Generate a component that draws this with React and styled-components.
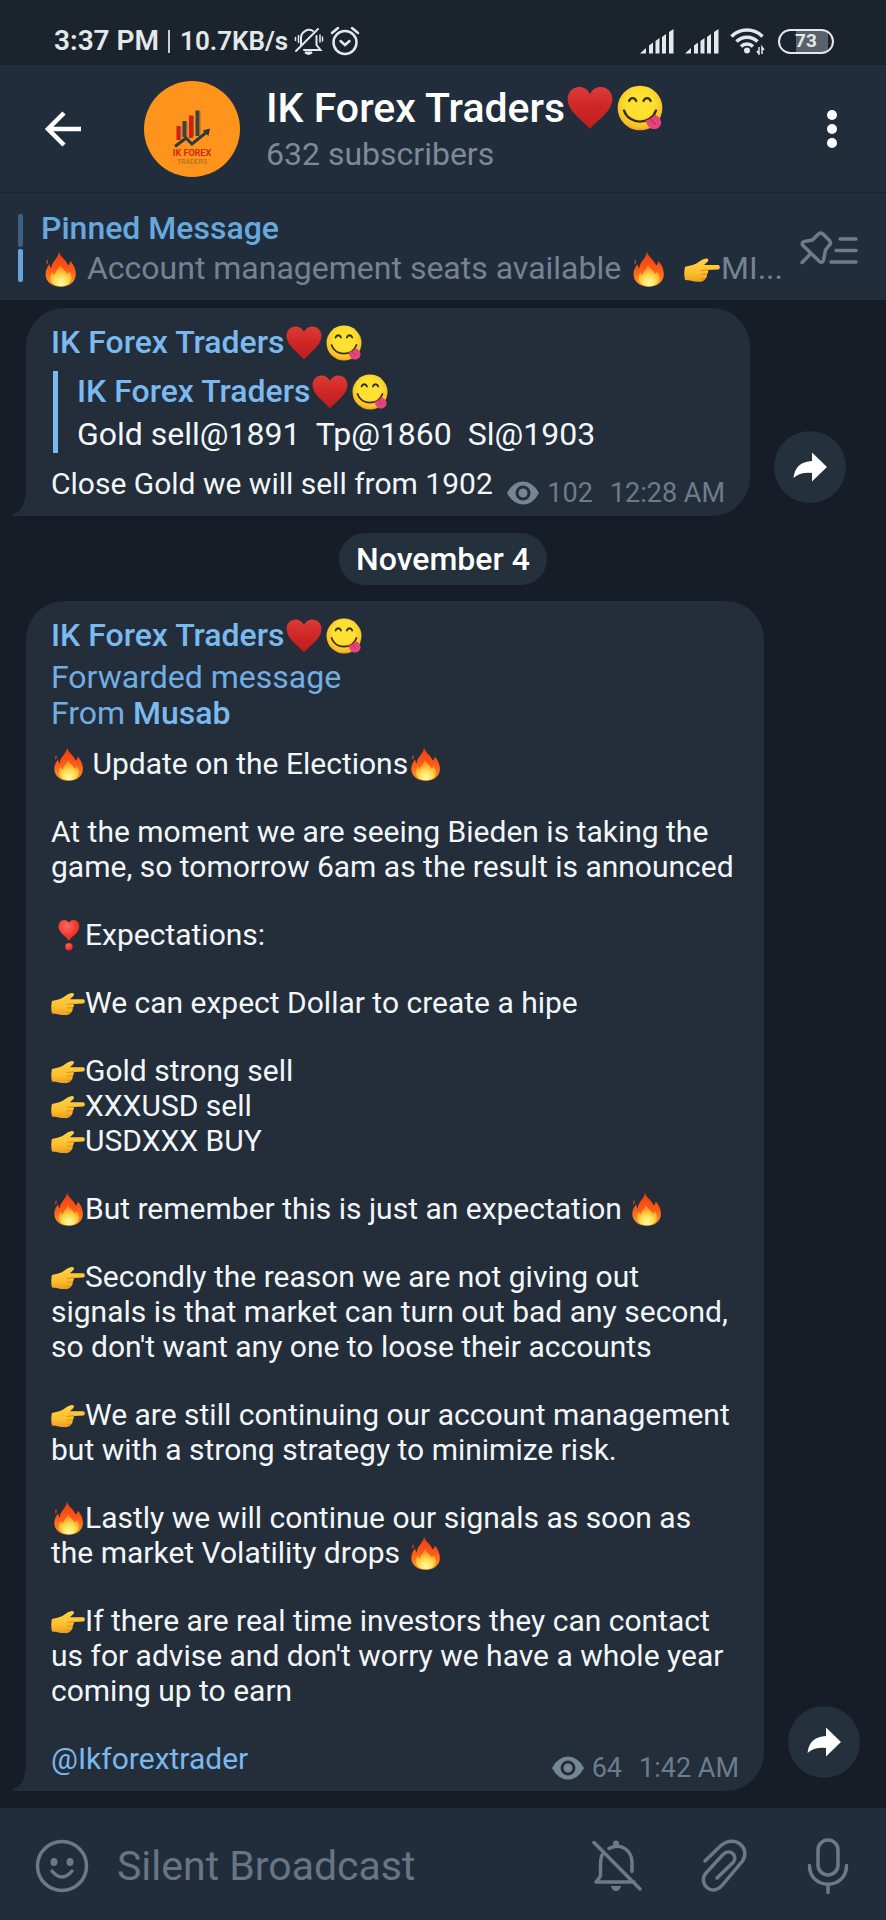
import React from "react";
import styled, { createGlobalStyle } from "styled-components";

const GlobalStyle = createGlobalStyle`
  * {
    box-sizing: border-box;
  }
  body {
    margin: 0;
    background: #161d26;
    font-family: Roboto, "Liberation Sans", sans-serif;
    color: #f3f6f9;
  }
  button, input {
    font: inherit;
    color: inherit;
    border: 0;
    padding: 0;
    background: none;
  }
  p, h1, h2 {
    margin: 0;
    font-weight: 400;
  }
  svg {
    display: block;
  }
`;

const Page = styled.div`
  min-height: 100vh;
  display: flex;
  flex-direction: column;
`;

/* status bar */
const StatusBar = styled.div`
  display: flex;
  align-items: center;
  justify-content: space-between;
  height: 65px;
  padding: 17px 52px 0 54px;
  background: #1b242d;
  color: #e4e8eb;
  font-weight: 700;
  font-size: 27px;
  line-height: 32px;
`;

const StatusGroup = styled.div`
  display: flex;
  align-items: center;
  gap: ${(props) => props.$gap};
`;

const Clock = styled.span`
  font-size: 28px;
  font-weight: 600;
`;

const NetSpeed = styled.span`
  font-size: 26px;
  font-weight: 600;
`;

const Divider = styled.span`
  width: 2px;
  height: 23px;
  margin: 0 4px 0 3px;
  background: #c9ced2;
`;

const Battery = styled.span`
  display: flex;
  align-items: center;
  justify-content: center;
  width: 56px;
  height: 25px;
  margin-left: 2px;
  border: 2px solid #e4e8eb;
  border-radius: 13px;
  background: linear-gradient(90deg, transparent 30%, #59616a 30%, #59616a 92%, transparent 92%);
  font-size: 19px;
  line-height: 20px;
`;

/* header */
const Header = styled.header`
  display: flex;
  align-items: center;
  height: 128px;
  padding: 0 40px;
  background: #222d3b;
  border-bottom: 1px solid #1c2531;
`;

const IconButton = styled.button`
  display: flex;
  flex: none;
  cursor: pointer;
`;

const Avatar = styled.div`
  flex: none;
  margin: 0 26px 0 58px;
`;

const Channel = styled.div`
  flex: 1;
  min-width: 0;
  display: flex;
  flex-direction: column;
  gap: 2px;
`;

const ChannelName = styled.h1`
  font-size: 41px;
  line-height: 48px;
  font-weight: 500;
  color: #ffffff;
  white-space: nowrap;
`;

const Subscribers = styled.p`
  font-size: 32px;
  line-height: 40px;
  color: #7c8a99;
`;

/* pinned message */
const Pinned = styled.section`
  display: flex;
  align-items: center;
  padding: 15px 28px 12px 18px;
  background: #222d3b;
`;

const PinnedBars = styled.div`
  display: flex;
  flex-direction: column;
  gap: 2px;
  margin-right: 18px;
`;

const PinnedBar = styled.span`
  width: 5px;
  height: 33px;
  border-radius: 2px;
  background: ${(props) => (props.$active ? "#65a5dc" : "#3f5f80")};
`;

const PinnedBody = styled.div`
  flex: 1;
  min-width: 0;
  margin-right: 12px;
  font-size: 32px;
  line-height: 40px;
`;

const PinnedTitle = styled.h2`
  font-size: inherit;
  font-weight: 500;
  color: #67a9df;
`;

const PinnedText = styled.p`
  color: #748394;
  white-space: nowrap;
  overflow: hidden;
`;

/* messages */
const Chat = styled.main`
  flex: 1;
  display: flex;
  flex-direction: column;
  padding: 8px 26px 14px;
`;

const MessageRow = styled.div`
  display: flex;
  align-items: flex-end;
  gap: 24px;
`;

const Bubble = styled.article`
  position: relative;
  min-width: 0;
  flex: 0 1 ${(props) => props.$basis};
  padding: 14px 25px 7px;
  border-radius: 38px 38px 38px 0;
  background: #232e3a;

  &::before {
    content: "";
    position: absolute;
    left: -13px;
    bottom: 0;
    width: 13px;
    height: 26px;
    background: radial-gradient(13px 24px at 0 0, transparent 96%, #232e3a 100%);
  }
`;

const Sender = styled.h2`
  font-size: 32px;
  line-height: 40px;
  font-weight: 500;
  color: #7bbaf0;
`;

const Quote = styled.blockquote`
  margin: 9px 0 13px 2px;
  padding-left: 19px;
  border-left: 5px solid #7bbaf0;
`;

const QuoteText = styled.p`
  margin-top: 4px;
  font-size: 32px;
  line-height: 38px;
  white-space: pre-wrap;
`;

const Forwarded = styled.p`
  font-size: 32px;
  line-height: 36px;
  margin: 4px 0 15px;
  color: #72aee2;
`;

const ForwardedFrom = styled.strong`
  font-weight: 500;
  color: #7bbaf0;
`;

const Paragraphs = styled.div`
  display: flex;
  flex-direction: column;
  gap: 33px;
`;

const Text = styled.p`
  font-size: 30px;
  line-height: 35px;
`;

const Mention = styled.a`
  color: #7bb8ec;
  text-decoration: none;
`;

const LastLine = styled.div`
  display: flex;
  align-items: flex-start;
  justify-content: space-between;
`;

const Meta = styled.div`
  display: flex;
  align-items: center;
  margin-top: 11px;
  font-size: 27px;
  line-height: 32px;
  color: #6d7c8c;
  white-space: nowrap;
`;

const Views = styled.span`
  margin: 0 17px 0 8px;
`;

const ShareButton = styled.button`
  display: flex;
  flex: none;
  align-items: center;
  justify-content: center;
  width: 72px;
  height: 72px;
  margin-bottom: 13px;
  border-radius: 50%;
  background: #24303c;
  cursor: pointer;
`;

const DateBadge = styled.div`
  align-self: center;
  margin: 17px 0 16px;
  padding: 6px 17px;
  border-radius: 26px;
  background: #24303c;
  font-size: 32px;
  line-height: 40px;
  font-weight: 500;
  color: #ffffff;
`;

/* composer */
const Composer = styled.form`
  display: flex;
  align-items: center;
  height: 112px;
  padding: 4px 36px 0 35px;
  background: #222d3b;
`;

const ComposerInput = styled.input`
  flex: 1;
  min-width: 0;
  margin: 0 28px;
  font-size: 41px;
  line-height: 48px;
  outline: none;

  &::placeholder {
    color: #677586;
    opacity: 1;
  }
`;

const ComposerActions = styled.div`
  display: flex;
  align-items: center;
  gap: 58px;
`;

/* emoji */
const emojiSizes = {
  text: { size: 34, gap: 0, drop: 7 },
  pinned: { size: 36, gap: 1, drop: 8 },
  name: { size: 36, gap: 2, drop: 8 },
  title: { size: 46, gap: 2, drop: 9 },
};

const EmojiSvg = styled.svg`
  display: inline-block;
  width: ${(props) => emojiSizes[props.$kind].size}px;
  height: ${(props) => emojiSizes[props.$kind].size}px;
  margin: 0 ${(props) => emojiSizes[props.$kind].gap}px;
  vertical-align: -${(props) => emojiSizes[props.$kind].drop}px;
`;

const EmojiGradients = styled.svg`
  position: absolute;
  width: 0;
  height: 0;
`;

const EmojiDefs = () => (
  <EmojiGradients aria-hidden="true">
    <defs>
      <linearGradient id="heartFill" x1="0" y1="0" x2="0" y2="1">
        <stop offset="0" stopColor="#dc3b38" />
        <stop offset="0.5" stopColor="#cf2626" />
        <stop offset="1" stopColor="#c01c1e" />
      </linearGradient>
      <radialGradient id="faceFill" cx="0.5" cy="0.4" r="0.62">
        <stop offset="0.5" stopColor="#fde030" />
        <stop offset="0.85" stopColor="#f8bf26" />
        <stop offset="1" stopColor="#ee9a1c" />
      </radialGradient>
      <linearGradient id="flameFill" x1="0" y1="0" x2="0" y2="1">
        <stop offset="0" stopColor="#ee3a10" />
        <stop offset="0.5" stopColor="#fb5a17" />
        <stop offset="1" stopColor="#ff9b2b" />
      </linearGradient>
      <radialGradient id="flameCore" cx="0.5" cy="0.85" r="0.75">
        <stop offset="0" stopColor="#fffbb4" />
        <stop offset="0.45" stopColor="#ffdc4a" />
        <stop offset="1" stopColor="#ff8a22" />
      </radialGradient>
      <linearGradient id="handFill" x1="0" y1="0" x2="0" y2="1">
        <stop offset="0" stopColor="#ffd24a" />
        <stop offset="0.6" stopColor="#fdc02f" />
        <stop offset="1" stopColor="#ee9f22" />
      </linearGradient>
      <radialGradient id="markFill" cx="0.4" cy="0.3" r="0.8">
        <stop offset="0" stopColor="#ff6a5e" />
        <stop offset="0.6" stopColor="#f2352c" />
        <stop offset="1" stopColor="#d61f1f" />
      </radialGradient>
    </defs>
  </EmojiGradients>
);

const Heart = ({ kind = "name" }) => (
  <EmojiSvg $kind={kind} viewBox="0 0 36 36" role="img" aria-label="red heart">
    <path
      d="M18 34.500C13 28 .5 21 .5 11 .5 5.500 4.500 1.500 9.500 1.500 13 1.500 16.500 3.500 18 7c1.500-3.500 5-5.500 8.500-5.500 5 0 9 4 9 9.500 0 10-12.500 17-17.500 23.500z"
      fill="url(#heartFill)"
    />
  </EmojiSvg>
);

const Yum = ({ kind = "name" }) => (
  <EmojiSvg $kind={kind} viewBox="0 0 36 36" role="img" aria-label="face savoring food">
    <circle cx="18" cy="18" r="17.500" fill="url(#faceFill)" />
    <g fill="none" stroke="#3b2a12" strokeWidth="1.800" strokeLinecap="round">
      <path d="M9.500 12.500c1-3 4.500-3 5.500 0M20.800 12.500c1-3 4.500-3 5.500 0" />
      <path d="M5.500 20c4 11.500 21 11.500 25 0" />
    </g>
    <path d="M22.500 27.500c3-.5 5.500-2 7-4.500 2 1 4.500 2.500 5 5.500.5 4-3 6.500-6.500 6-3-.5-5-4-5.500-7z" fill="#e4447c" />
    <path d="M26 26.500l4 4" stroke="#c42d66" strokeWidth="1" strokeLinecap="round" />
  </EmojiSvg>
);

const Fire = ({ kind = "text" }) => (
  <EmojiSvg $kind={kind} viewBox="0 0 36 36" role="img" aria-label="fire">
    <path
      d="M17 .3c.5 5 6 7.500 8.500 12.700.5 1.500 1.200 1.500 1.800.2.7-1.200.7-2 .9-3.200 3.300 3 5.600 8.500 5.600 13 0 8-6.300 12.700-15 12.700S3.500 31 3.500 23c0-4 2-7.500 4-10 .3 2 .8 3.500 1.800 4.500C9 11 16.500 7.500 17 .3z"
      fill="url(#flameFill)"
    />
    <path d="M5.500 8.500c-1.200 1.500-1.500 3.500-.5 5 1.200-1.500 1.300-3.500.5-5z" fill="#e8441a" />
    <path
      d="M18 13.500c1 4 6 6 7 9.500 1-.5 1.500-1.500 2-2.500 2 2.500 3 5 2.500 7.500-.8 4.500-5 7.300-10.500 7.300S9 32.500 8.300 28c-.4-2.500.7-5 2.200-7 .5 1.500 1 2.300 2 3 .5-4.500 5-6 5.500-10.500z"
      fill="url(#flameCore)"
    />
  </EmojiSvg>
);

const PointRight = ({ kind = "text" }) => (
  <EmojiSvg $kind={kind} viewBox="0 0 36 36" role="img" aria-label="pointing right">
    <path
      d="M1 16c3-1.200 6-1.300 9-2.500 4-1.200 7-5.200 12-6 2.500-.3 3 2 1.500 3.300L20 14h14c2.500.2 2.500 4.300 0 4.500L24 19c.5 2 0 3-1 4 .2 2.500-.5 4-2 5-1 2.500-4 3-7 2.800-5-.1-9-1.800-13-1.800-1-4-1-9 0-13z"
      fill="url(#handFill)"
    />
    <path d="M24 18.800l-7 .7M23 23l-5.500.2M21 28h-4" stroke="#d98c1b" strokeWidth="1" strokeLinecap="round" />
  </EmojiSvg>
);

const HeartMark = ({ kind = "text" }) => (
  <EmojiSvg $kind={kind} viewBox="0 0 36 36" role="img" aria-label="heart exclamation">
    <path
      d="M19 24.500c-2-5-11-8-11-15.500C8 5 10.500 2 14 2c2.200 0 4 1.200 5 3 1-1.800 2.800-3 5-3 3.500 0 6 3 6 7 0 7.500-9 10.500-11 15.500z"
      fill="url(#markFill)"
    />
    <circle cx="19" cy="30.500" r="4" fill="url(#markFill)" />
  </EmojiSvg>
);

const BrandName = ({ kind }) => (
  <>
    IK Forex Traders
    <Heart kind={kind} />
    <Yum kind={kind} />
  </>
);

/* icons */
const MutedIcon = () => (
  <svg width="30" height="28" viewBox="0 0 30 28" fill="none" stroke="#e4e8eb" strokeWidth="2" strokeLinecap="round">
    <path d="M7 18V11a8 8 0 0 1 12-7M22.500 9v9l4 5H10" />
    <path d="M2 24 24 2" />
    <path d="M4.500 8.500v7M1.500 10.500v3M26 8v7M28.500 10v4" strokeWidth="1.500" />
    <path d="M11 25.500h7l-3.500 1.500z" fill="#e4e8eb" />
  </svg>
);

const AlarmIcon = () => (
  <svg width="30" height="30" viewBox="0 0 30 30" fill="none" stroke="#e4e8eb" strokeWidth="2.500" strokeLinecap="round">
    <circle cx="15" cy="16.500" r="11.500" />
    <path d="M2 7 8 2M28 7 22 2M10.500 15l4.500 4 4.500-4" />
  </svg>
);

const SignalIcon = () => (
  <svg width="34" height="25" viewBox="0 0 34 25" fill="#e4e8eb">
    <path d="M0 24.500 6 19v5.500zM9 16.500l4-3v11H9zM15.500 12l4-3v15.500h-4zM22 8l4-3v19.500h-4zM29 3l4.500-3v24.500H29z" />
  </svg>
);

const WifiIcon = () => (
  <svg width="35" height="28" viewBox="0 0 35 28" fill="none" stroke="#e4e8eb" strokeWidth="3.500">
    <path d="M1.500 9.500a22 22 0 0 1 31 0M6.500 14.500a15 15 0 0 1 21 0M11 19.500a8.500 8.500 0 0 1 12 0" />
    <circle cx="17" cy="23.500" r="3" fill="#e4e8eb" stroke="none" />
    <path d="M29 20v7l-2-3M32 27v-7l2 3" strokeWidth="1.500" />
  </svg>
);

const BackIcon = () => (
  <svg width="46" height="40" viewBox="0 0 46 40" fill="none" stroke="#fff" strokeWidth="4.500">
    <path d="M41 20H8M24 4 8 20l16 16" />
  </svg>
);

const DotsIcon = () => (
  <svg width="28" height="40" viewBox="0 0 28 40" fill="#fff">
    <circle cx="14" cy="6" r="5" />
    <circle cx="14" cy="20" r="5" />
    <circle cx="14" cy="34" r="5" />
  </svg>
);

const AvatarLogo = () => (
  <svg width="96" height="96" viewBox="0 0 96 96">
    <circle cx="48" cy="48" r="48" fill="#fe941c" />
    <path d="M32.500 45h4v14h-4zM45 34.500h4V57h-4z" fill="#cf1f1a" />
    <path d="M38.500 40h4v16h-4zM51.500 29.500h4V55h-4z" fill="#3c4141" />
    <path d="M37 45.500v12M43 41v13M49.500 35v20M56 30v23" stroke="#a5662a" strokeWidth="1" />
    <path d="M31 65.500l11-8.500 6 6 16-13" fill="none" stroke="#33393b" strokeWidth="3" />
    <path d="M58.500 49.500l7.500-2-1.500 7.500z" fill="#33393b" />
    <text x="48" y="75" textAnchor="middle" fontSize="9" fontWeight="700" fill="#cf2a18">IK FOREX</text>
    <text x="48" y="83" textAnchor="middle" fontSize="7" fill="#9a6a25">TRADERS</text>
  </svg>
);

const PinListIcon = () => (
  <svg width="58" height="34" viewBox="0 0 58 34" fill="none" stroke="#6d7c8c" strokeWidth="3.500" strokeLinecap="round" strokeLinejoin="round">
    <path d="M2 31.500 11 22.500M2.500 14q-1-3 2-3.500l8-1.500 6-6q2.500-2 5 .5l6 6q2 2.500 0 4.500l-4 5-2 10.500q-1.500 3-4 1z" />
    <path d="M40 8h16M36 19.500h20M31 31h25" />
  </svg>
);

const EyeIcon = () => (
  <svg width="32" height="24" viewBox="0 0 32 24">
    <path d="M0 12Q6 .5 16 .5T32 12Q26 23.500 16 23.500T0 12z" fill="#748596" />
    <circle cx="16" cy="12" r="6" fill="none" stroke="#232e3a" strokeWidth="3" />
  </svg>
);

const ShareIcon = () => (
  <svg width="36" height="32" viewBox="0 0 36 32" fill="#fff">
    <path d="M20 1.500 35 16 20 30.500V22Q8 21 1.500 27 3 11 20 10z" />
  </svg>
);

const SmileIcon = () => (
  <svg width="54" height="54" viewBox="0 0 54 54" fill="none" stroke="#6b7989" strokeWidth="3.500" strokeLinecap="round">
    <circle cx="27" cy="27" r="24.500" />
    <path d="M17 32q10 12 20 0" />
    <ellipse cx="19" cy="23" rx="3.500" ry="4" fill="#6b7989" stroke="none" />
    <ellipse cx="35" cy="23" rx="3.500" ry="4" fill="#6b7989" stroke="none" />
  </svg>
);

const BellOffIcon = () => (
  <svg width="50" height="54" viewBox="0 0 50 54" fill="none" stroke="#6b7989" strokeWidth="3.500" strokeLinecap="round" strokeLinejoin="round">
    <path d="M2 3.500 48 50" />
    <path d="M17 9.500C30 3 40 12 40 24v8.500M10 16q-1.500 4-1.500 9v11q0 2-4.500 7h38" />
    <circle cx="24" cy="4.500" r="3" fill="#6b7989" stroke="none" />
    <path d="M19 47h10q-1 5-5 5t-5-5z" fill="#6b7989" stroke="none" />
  </svg>
);

const ClipIcon = () => (
  <svg width="48" height="54" viewBox="0 0 48 54" fill="none" stroke="#6b7989" strokeWidth="3.500" strokeLinecap="round">
    <path d="M5 22 21 6.500C35-5 51 9 42.500 22L22 46.500C12 58 -2 45 5.500 34.500L23 15.500c7-6.500 15 1 10.500 7.500L17 39" />
  </svg>
);

const MicIcon = () => (
  <svg width="44" height="58" viewBox="0 0 44 58" fill="none" stroke="#6b7989" strokeWidth="3.500" strokeLinecap="round">
    <rect x="12" y="3" width="20" height="35" rx="10" />
    <path d="M3.500 28.500c0 25 37 25 37 0M22 47.500v8" />
  </svg>
);

const MessageMeta = ({ views, time }) => (
  <Meta>
    <EyeIcon />
    <Views>{views}</Views>
    <time>{time}</time>
  </Meta>
);

export default function App() {
  return (
    <>
      <GlobalStyle />
      <EmojiDefs />
      <Page>
        <StatusBar>
          <StatusGroup $gap="6px">
            <Clock>3:37 PM</Clock>
            <Divider />
            <NetSpeed>10.7KB/s</NetSpeed>
            <MutedIcon />
            <AlarmIcon />
          </StatusGroup>
          <StatusGroup $gap="11px">
            <SignalIcon />
            <SignalIcon />
            <WifiIcon />
            <Battery>73</Battery>
          </StatusGroup>
        </StatusBar>
        <Header>
          <IconButton type="button" aria-label="Back">
            <BackIcon />
          </IconButton>
          <Avatar>
            <AvatarLogo />
          </Avatar>
          <Channel>
            <ChannelName>
              <BrandName kind="title" />
            </ChannelName>
            <Subscribers>632 subscribers</Subscribers>
          </Channel>
          <IconButton type="button" aria-label="More options">
            <DotsIcon />
          </IconButton>
        </Header>
        <Pinned>
          <PinnedBars>
            <PinnedBar />
            <PinnedBar $active />
          </PinnedBars>
          <PinnedBody>
            <PinnedTitle>Pinned Message</PinnedTitle>
            <PinnedText>
              <Fire kind="pinned" /> Account management seats available <Fire kind="pinned" />
              {" \u00a0"}
              <PointRight kind="pinned" />
              MI...
            </PinnedText>
          </PinnedBody>
          <IconButton type="button" aria-label="Pinned messages">
            <PinListIcon />
          </IconButton>
        </Pinned>
        <Chat>
          <MessageRow>
            <Bubble $basis="724px">
              <Sender>
                <BrandName />
              </Sender>
              <Quote>
                <Sender>
                  <BrandName />
                </Sender>
                <QuoteText>{"Gold sell@1891  Tp@1860  Sl@1903"}</QuoteText>
              </Quote>
              <LastLine>
                <Text>Close Gold we will sell from 1902</Text>
                <MessageMeta views="102" time="12:28 AM" />
              </LastLine>
            </Bubble>
            <ShareButton type="button" aria-label="Share">
              <ShareIcon />
            </ShareButton>
          </MessageRow>
          <DateBadge>November 4</DateBadge>
          <MessageRow>
            <Bubble $basis="738px">
              <Sender>
                <BrandName />
              </Sender>
              <Forwarded>
                Forwarded message
                <br />
                From <ForwardedFrom>Musab</ForwardedFrom>
              </Forwarded>
              <Paragraphs>
                <Text>
                  <Fire /> Update on the Elections
                  <Fire />
                </Text>
                <Text>
                  At the moment we are seeing Bieden is taking the game, so tomorrow 6am as the result is announced
                </Text>
                <Text>
                  <HeartMark />
                  Expectations:
                </Text>
                <Text>
                  <PointRight />
                  We can expect Dollar to create a hipe
                </Text>
                <Text>
                  <PointRight />
                  Gold strong sell
                  <br />
                  <PointRight />
                  XXXUSD sell
                  <br />
                  <PointRight />
                  USDXXX BUY
                </Text>
                <Text>
                  <Fire />
                  But remember this is just an expectation <Fire />
                </Text>
                <Text>
                  <PointRight />
                  Secondly the reason we are not giving out signals is that market can turn out bad any second, so
                  don't want any one to loose their accounts
                </Text>
                <Text>
                  <PointRight />
                  We are still continuing our account management but with a strong strategy to minimize risk.
                </Text>
                <Text>
                  <Fire />
                  Lastly we will continue our signals as soon as the market Volatility drops <Fire />
                </Text>
                <Text>
                  <PointRight />
                  If there are real time investors they can contact us for advise and don't worry we have a whole
                  year coming up to earn
                </Text>
                <LastLine>
                  <Text>
                    <Mention href="#ikforextrader">@Ikforextrader</Mention>
                  </Text>
                  <MessageMeta views="64" time="1:42 AM" />
                </LastLine>
              </Paragraphs>
            </Bubble>
            <ShareButton type="button" aria-label="Share">
              <ShareIcon />
            </ShareButton>
          </MessageRow>
        </Chat>
        <Composer>
          <IconButton type="button" aria-label="Emoji">
            <SmileIcon />
          </IconButton>
          <ComposerInput type="text" aria-label="Silent Broadcast" placeholder="Silent Broadcast" />
          <ComposerActions>
            <IconButton type="button" aria-label="Toggle notifications">
              <BellOffIcon />
            </IconButton>
            <IconButton type="button" aria-label="Attach file">
              <ClipIcon />
            </IconButton>
            <IconButton type="button" aria-label="Record voice">
              <MicIcon />
            </IconButton>
          </ComposerActions>
        </Composer>
      </Page>
    </>
  );
}
